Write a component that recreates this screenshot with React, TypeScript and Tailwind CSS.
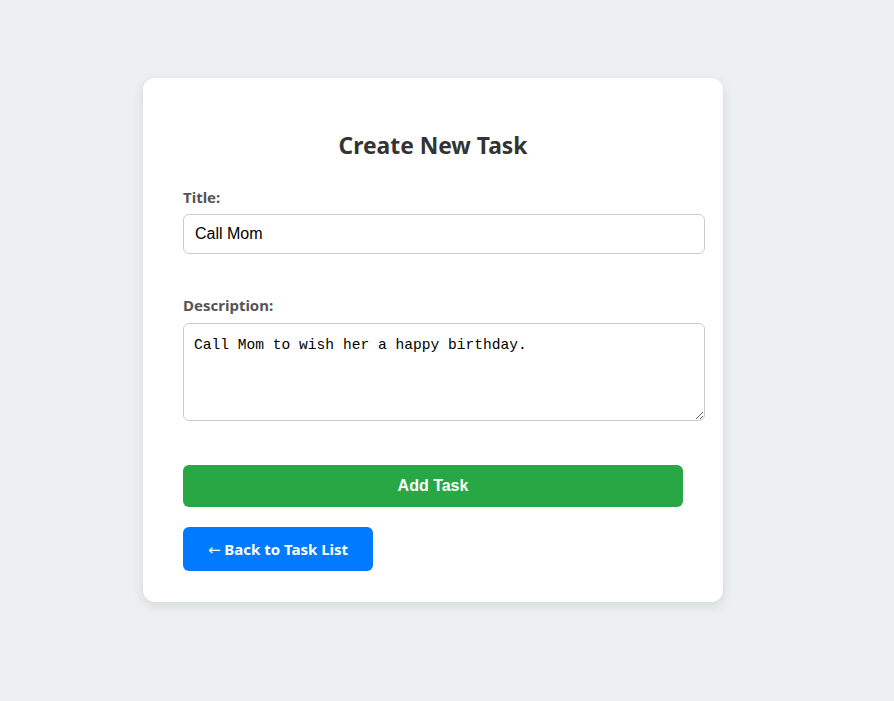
import React from "react";

export default function App() {
  const ui = { fontFamily: '"Noto Sans", "Open Sans", sans-serif' };
  return (
    <div className="min-h-screen w-full bg-[#ecf0f1] pt-[78px]" style={ui}>
      <div className="ml-[143px] w-[580px] rounded-[12px] bg-white px-[40px] pt-[40px] pb-[31px] shadow-[0_4px_12px_rgba(0,0,0,0.1)]">
        <h2 className="mt-[13px] mb-[26px] text-center text-[22.8px] leading-[30px] font-bold text-[#333]">
          Create New Task
        </h2>
        <label className="block text-[15px] leading-[20px] font-bold text-[#555] mb-[7px]">Title:</label>
        <input
          className="block h-[40px] w-[522px] rounded-[6px] border border-[#ccc] px-[11px] text-[16px] text-black outline-none"
          style={{ fontFamily: '"Liberation Sans", Arial, sans-serif' }}
          defaultValue="Call Mom"
        />
        <label className="mt-[41px] block text-[15px] leading-[20px] font-bold text-[#555] mb-[8px]">Description:</label>
        <textarea
          className="block h-[98px] w-[522px] rounded-[6px] border border-[#ccc] px-[10px] py-[11px] text-[14.6px] leading-[20px] text-black outline-none"
          style={{ fontFamily: '"Liberation Mono", "DejaVu Sans Mono", monospace' }}
          defaultValue="Call Mom to wish her a happy birthday."
        />
        <button
          className="mt-[44px] flex h-[42px] w-[500px] items-center justify-center rounded-[6px] bg-[#28a745] text-[16px] font-bold text-white"
          style={{ fontFamily: '"Liberation Sans", Arial, sans-serif' }}
        >
          Add Task
        </button>
        <button className="mt-[20px] flex h-[44px] w-[190px] items-center justify-center rounded-[6px] bg-[#007bff] text-[15px] font-bold text-white">
          <span className="pt-[2px]">
            <span className="font-normal" style={{ fontFamily: '"DejaVu Sans", sans-serif' }}>←</span> Back to Task List
          </span>
        </button>
      </div>
    </div>
  );
}
